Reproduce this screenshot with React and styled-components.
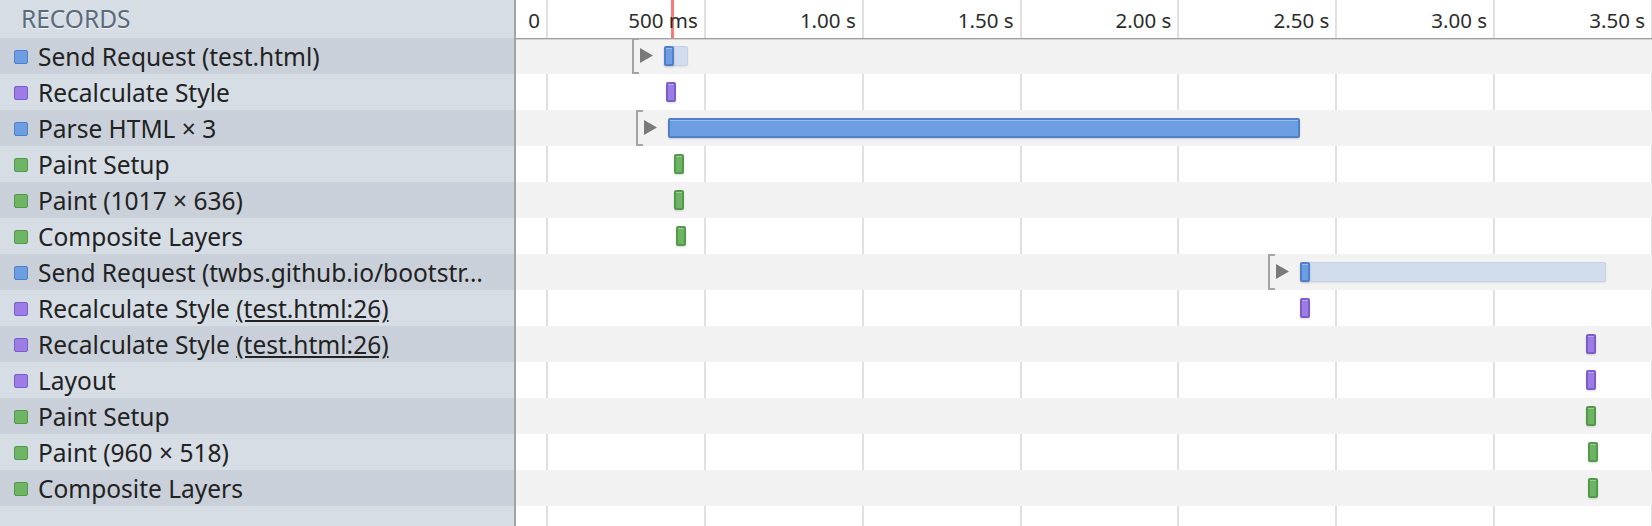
import React from 'react';
import styled, { createGlobalStyle } from 'styled-components';

const GlobalStyle = createGlobalStyle`
  html, body { margin: 0; padding: 0; height: 100%; }
  body {
    font-family: "Noto Sans", "DejaVu Sans", sans-serif;
    background: #fff;
    overflow: hidden;
  }
  #root { height: 100%; }
`;

const KINDS = {
  blue: { fill: '#6c9ee1', border: '#4f80c9' },
  purple: { fill: '#9c7de6', border: '#7b5dca' },
  green: { fill: '#6db564', border: '#529a49' },
};

const GRID_START = 30;
const GRID_STEP = 157.86;
const TICKS = ['0', '500 ms', '1.00 s', '1.50 s', '2.00 s', '2.50 s', '3.00 s', '3.50 s'];

const records = [
  { kind: 'blue', label: 'Send Request (test.html)', expand: 116, light: { x: 148, w: 24 }, bar: { x: 148, w: 10 } },
  { kind: 'purple', label: 'Recalculate Style', bar: { x: 150, w: 10 } },
  { kind: 'blue', label: 'Parse HTML × 3', expand: 120, bar: { x: 152, w: 632 } },
  { kind: 'green', label: 'Paint Setup', bar: { x: 158, w: 10 } },
  { kind: 'green', label: 'Paint (1017 × 636)', bar: { x: 158, w: 10 } },
  { kind: 'green', label: 'Composite Layers', bar: { x: 160, w: 10 } },
  { kind: 'blue', label: 'Send Request (twbs.github.io/bootstr…', expand: 752, light: { x: 784, w: 306 }, bar: { x: 784, w: 10 } },
  { kind: 'purple', label: 'Recalculate Style', link: '(test.html:26)', bar: { x: 784, w: 10 } },
  { kind: 'purple', label: 'Recalculate Style', link: '(test.html:26)', bar: { x: 1070, w: 10 } },
  { kind: 'purple', label: 'Layout', bar: { x: 1070, w: 10 } },
  { kind: 'green', label: 'Paint Setup', bar: { x: 1070, w: 10 } },
  { kind: 'green', label: 'Paint (960 × 518)', bar: { x: 1072, w: 10 } },
  { kind: 'green', label: 'Composite Layers', bar: { x: 1072, w: 10 } },
];

const Panel = styled.div`
  display: flex;
  width: 100%;
  height: 100vh;
  overflow: hidden;
`;

const Sidebar = styled.aside`
  flex: none;
  width: 514px;
  display: flex;
  flex-direction: column;
  background: #d6dde5;
  border-right: 2px solid #a3a3a3;
`;

const SidebarHeader = styled.div`
  height: 38px;
  line-height: 38px;
  padding-left: 21px;
  font-size: 24.5px;
  color: #5a6a7d;
  text-shadow: 0 1px 0 rgba(255, 255, 255, 0.75);
`;

const RecordRow = styled.div`
  height: 36px;
  box-sizing: border-box;
  padding: 2px 14px 0 14px;
  display: flex;
  align-items: center;
  gap: 10px;
  background: ${(p) => (p.$alt ? '#c9d0d9' : 'transparent')};
  font-size: 24.5px;
  line-height: 34px;
  color: #222;
  white-space: nowrap;
`;

const Swatch = styled.span`
  flex: none;
  width: 14px;
  height: 14px;
  box-sizing: border-box;
  border-radius: 2px;
  background: ${(p) => KINDS[p.$kind].fill};
  border: 1.5px solid ${(p) => KINDS[p.$kind].border};
`;

const RecordLabel = styled.span`
  min-width: 0;
  overflow: hidden;
  text-overflow: ellipsis;
`;

const SourceLink = styled.span`
  text-decoration: underline;
  text-underline-offset: 2px;
`;

const Timeline = styled.section`
  flex: 1;
  position: relative;
  overflow: hidden;
  background: #fff;
`;

const GridLine = styled.div`
  position: absolute;
  top: 0;
  bottom: 0;
  width: 2px;
  background: rgba(0, 0, 0, 0.12);
`;

const TimeHeader = styled.div`
  position: relative;
  z-index: 1;
  height: 38px;
  &::after {
    content: '';
    position: absolute;
    left: 0;
    right: 0;
    top: 38px;
    height: 1px;
    background: #a0a0a0;
    box-shadow: 0 1px 0 rgba(0, 0, 0, 0.12);
  }
`;

const Marker = styled.div`
  position: absolute;
  top: 0;
  left: 155px;
  width: 3px;
  height: 38px;
  background: #f67c7c;
`;

const TickLabel = styled.span`
  position: absolute;
  top: 1px;
  line-height: 38px;
  font-size: 20.5px;
  color: #2c2c2c;
  white-space: nowrap;
  transform: translateX(calc(-100% - 6px));
`;

const TimeRow = styled.div`
  position: relative;
  height: 36px;
  background: ${(p) => (p.$alt ? '#f2f2f2' : 'transparent')};
`;

const Bar = styled.div`
  position: absolute;
  z-index: 2;
  top: 8px;
  height: 20px;
  box-sizing: border-box;
  border-radius: 2px;
  background: ${(p) => KINDS[p.$kind].fill};
  border: 2px solid ${(p) => KINDS[p.$kind].border};
  box-shadow: inset 0 1px 0 rgba(255, 255, 255, 0.3), 0 1px 2px rgba(0, 0, 0, 0.15);
`;

const LightBar = styled.div`
  position: absolute;
  z-index: 1;
  top: 8px;
  height: 20px;
  box-sizing: border-box;
  border-radius: 2px;
  background: rgba(90, 140, 215, 0.22);
  border: 1px solid rgba(90, 140, 215, 0.12);
  box-shadow: 0 1px 2px rgba(0, 0, 0, 0.08);
`;

const Bracket = styled.div`
  position: absolute;
  z-index: 2;
  top: 0;
  width: 7px;
  height: 36px;
  box-sizing: border-box;
  border: 2px solid #a4a4a4;
  border-right: none;
`;

const Expander = styled.svg`
  position: absolute;
  z-index: 2;
  top: 10px;
  width: 13px;
  height: 15px;
`;

function ExpandControl({ x }) {
  return (
    <>
      <Bracket style={{ left: x }} />
      <Expander style={{ left: x + 8 }} viewBox="0 0 13 15">
        <polygon points="0,0 13,7.5 0,15" fill="#7a7a7a" />
      </Expander>
    </>
  );
}

export default function App() {
  return (
    <>
      <GlobalStyle />
      <Panel>
        <Sidebar>
          <SidebarHeader>RECORDS</SidebarHeader>
          {records.map((r, i) => (
            <RecordRow key={i} $alt={i % 2 === 0}>
              <Swatch $kind={r.kind} />
              <RecordLabel>
                {r.label}
                {r.link && (
                  <>
                    {' '}
                    <SourceLink>{r.link}</SourceLink>
                  </>
                )}
              </RecordLabel>
            </RecordRow>
          ))}
        </Sidebar>
        <Timeline>
          {TICKS.map((t, k) => (
            <GridLine key={t} style={{ left: GRID_START + k * GRID_STEP }} />
          ))}
          <TimeHeader>
            <Marker />
            {TICKS.map((t, k) => (
              <TickLabel key={t} style={{ left: GRID_START + k * GRID_STEP }}>
                {t}
              </TickLabel>
            ))}
          </TimeHeader>
          {records.map((r, i) => (
            <TimeRow key={i} $alt={i % 2 === 0}>
              {r.expand !== undefined && <ExpandControl x={r.expand} />}
              {r.light && <LightBar style={{ left: r.light.x, width: r.light.w }} />}
              <Bar $kind={r.kind} style={{ left: r.bar.x, width: r.bar.w }} />
            </TimeRow>
          ))}
        </Timeline>
      </Panel>
    </>
  );
}
